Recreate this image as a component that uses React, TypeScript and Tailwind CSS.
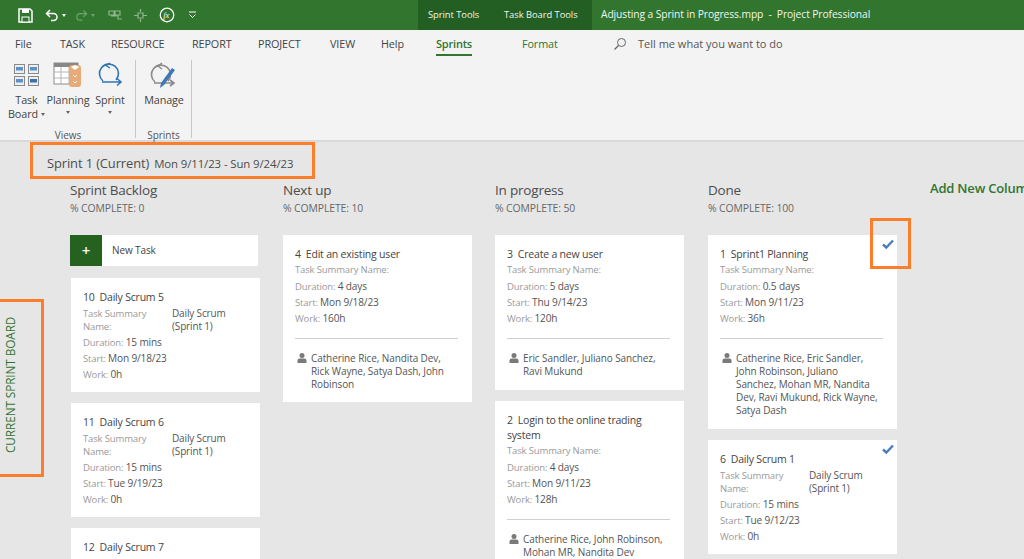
import React from "react";

const font = { fontFamily: '"Open Sans","Noto Sans",sans-serif' };

type Task = { title: string[]; id: string; summary?: string[]; dur?: string; start?: string; work?: string; people?: string[]; check?: boolean; h: string };

const Row = ({ label, value }: { label: string; value?: string }) => (
  <div className="h-[16px] overflow-visible whitespace-nowrap">
    {label} {value && <span className="text-[10.1px] text-[#555]">{value}</span>}
  </div>
);

const Card = ({ t }: { t: Task }) => (
  <div className={`relative shrink-0 w-[189px] overflow-hidden bg-white pl-[12px] pr-[10px] pt-[11px] ${t.h}`}>
    {t.check && (
      <svg className="absolute right-[2px] top-[3px]" width="14" height="12" viewBox="0 0 14 12">
        <path d="M2 6.5 L5.3 9.5 L12 2.5" fill="none" stroke="#4a7ebb" strokeWidth="2.4" />
      </svg>
    )}
    <div className="text-[10.5px] leading-[16px] text-[#444] tracking-[-0.2px]">
      {t.title.map((l, i) => (
        <div key={i} className={i > 0 ? "-mt-[1px]" : ""}>
          {i === 0 ? <><span className="mr-[5px]">{t.id}</span>{l}</> : l}
        </div>
      ))}
    </div>
    {t.dur && (
      <div className="text-[9.5px] leading-[16px] text-[#9a9a9a] tracking-[-0.15px]">
        {t.summary ? (
          <div className="flex">
            <div className="w-[89px] leading-[13px] pt-[2px] pb-[1px]">Task Summary<br />Name:</div>
            <div className="text-[10px] text-[#555] leading-[13px] pt-[2px] pb-[1px]">{t.summary[0]}<br />{t.summary[1]}</div>
          </div>
        ) : (
          <Row label="Task Summary Name:" />
        )}
        <Row label="Duration:" value={t.dur} />
        <Row label="Start:" value={t.start} />
        <Row label="Work:" value={t.work} />
      </div>
    )}
    {t.people && (
      <>
        <div className="mt-[12px] mr-[4px] h-px bg-[#d0d0d0]" />
        <div className="mt-[13px] flex text-[10px] leading-[12.9px] text-[#555] tracking-[-0.1px]">
          <svg className="mt-[1px] mr-[4px] shrink-0 ml-[2px]" width="10" height="10" viewBox="0 0 10 10">
            <circle cx="5" cy="2.6" r="2.5" fill="#7a7a7a" />
            <path d="M0.5 10 V7.4 Q0.5 5.6 2.5 5.6 H7.5 Q9.5 5.6 9.5 7.4 V10 Z" fill="#7a7a7a" />
          </svg>
          <div className="whitespace-nowrap">
            {t.people.map((p, i) => <div key={i}>{p}</div>)}
          </div>
        </div>
      </>
    )}
  </div>
);

const Column = ({ title, pct, children, cls = "" }: { title: string; pct: string; children: React.ReactNode; cls?: string }) => (
  <div className={`w-[189px] shrink-0 ${cls}`}>
    <div className="text-[13.5px] leading-[18px] text-[#4d4d4d] font-medium tracking-[-0.2px]">{title}</div>
    <div className="mt-[1px] text-[10.4px] leading-[16px] text-[#666] tracking-[-0.1px]">% COMPLETE: {pct}</div>
    <div className="mt-[19px] flex flex-col gap-[11px]">{children}</div>
  </div>
);

const Tab = ({ label, w, cls = "text-[#444]" }: { label: string; w: string; cls?: string }) => (
  <div className={`shrink-0 text-[10.8px] leading-[28px] tracking-[-0.1px] ${w} ${cls}`}>{label}</div>
);

const TaskBoardIcon = () => (
  <svg width="25" height="22" viewBox="0 0 25 22">
    {[[0,0],[14,0],[0,12],[14,12]].map(([x,y],i)=>(
      <g key={i}>
        <rect x={x+.5} y={y+.5} width="10" height="9" fill="#eee" stroke="#8a8a8a" />
        <rect x={x+2} y={y+3} width="7" height="3.5" fill={i===3?"#3d6fa8":"#5b93c9"} />
      </g>
    ))}
  </svg>
);

const PlanningIcon = () => (
  <svg width="30" height="26" viewBox="0 0 30 26">
    <rect x="1" y="1" width="24" height="21" fill="#fff" stroke="#8c8c8c" />
    <rect x="1" y="1" width="24" height="4" fill="#888" />
    <path d="M1 10H24M1 16H24M8 5V22M16 5V22" stroke="#b5b5b5" />
    <rect x="16" y="3" width="12" height="22" rx="3" fill="#e8ab78" />
    <path d="M18 5 L22 3 L26 5 L22 8 Z" fill="#fff" />
    <path d="M20 13l2 2 2-2M20 19l2 2 2-2" stroke="#fff" fill="none" />
  </svg>
);

const SprintIcon = () => (
  <svg width="26" height="26" viewBox="0 0 26 26">
    <path d="M6 19 A9.5 9.5 0 1 1 19 18" fill="none" stroke="#2f75b5" strokeWidth="1.6" />
    <path d="M13 1 L9 3.5 L13 6" fill="none" stroke="#2f75b5" strokeWidth="1.4" />
    <path d="M5 20 H24 M20 16.5 L24 20 L20 23.5" fill="none" stroke="#2f75b5" strokeWidth="1.6" />
  </svg>
);

const ManageIcon = () => (
  <svg width="29" height="29" viewBox="0 0 29 29">
    <path d="M5 21 A9.5 9.5 0 1 1 18 20" fill="none" stroke="#8a8a8a" strokeWidth="1.6" />
    <path d="M12 2 L8 5 L12 8" fill="none" stroke="#8a8a8a" strokeWidth="1.4" />
    <path d="M4 22 H24 M20 19 L24 22 L20 25" fill="none" stroke="#8a8a8a" strokeWidth="1.6" />
    <path d="M25 9 L14 24 L10 27 L11 22 L22 7 Z" fill="#3f78b5" />
  </svg>
);

const Caret = () => <span className="block w-0 h-0 border-x-[2.5px] border-x-transparent border-t-[3px] border-t-[#666]" />;

const RibbonBtn = ({ w, icon, lines, caret }: { w: string; icon: React.ReactNode; lines: string[]; caret?: "inline" | "below" }) => (
  <div className={`shrink-0 flex flex-col items-center ${w}`}>
    <div className="h-[30px] flex items-center justify-center">{icon}</div>
    <div className="mt-[3px] text-[10.8px] text-[#444] text-center tracking-[-0.1px] whitespace-nowrap">
      {lines.map((l, i) => (
        <div key={i} className="h-[14px] leading-[14px] flex items-center justify-center">
          {l}
          {caret === "inline" && i === lines.length - 1 && <span className="ml-[3px]"><Caret /></span>}
        </div>
      ))}
      {caret === "below" && <div className="h-[10px] flex items-center justify-center"><Caret /></div>}
    </div>
  </div>
);

const backlog: Task[] = [
  { id: "10", title: ["Daily Scrum 5"], summary: ["Daily Scrum", "(Sprint 1)"], dur: "15 mins", start: "Mon 9/18/23", work: "0h", h: "h-[114px]" },
  { id: "11", title: ["Daily Scrum 6"], summary: ["Daily Scrum", "(Sprint 1)"], dur: "15 mins", start: "Tue 9/19/23", work: "0h", h: "h-[114px]" },
  { id: "12", title: ["Daily Scrum 7"], h: "h-[31px]" },
];

export default function App() {
  return (
    <div style={font} className="w-[1024px] h-[559px] overflow-hidden relative flex flex-col bg-[#e6e6e6]">
      {/* title bar */}
      <div className="h-[30px] shrink-0 flex items-center bg-[#31752f] text-white">
        <div className="w-[418px] shrink-0 flex items-center pl-[18px]">
          <svg width="15" height="15" viewBox="0 0 15 15">
            <path d="M1 1H12L14 3V14H1Z" fill="none" stroke="#fff" strokeWidth="1.5" />
            <rect x="4" y="1" width="7" height="4" fill="#fff" />
            <rect x="4" y="9" width="7" height="5" fill="#31752f" stroke="#fff" />
          </svg>
          <svg className="ml-[12px]" width="14" height="13" viewBox="0 0 14 13">
            <path d="M5 1 L1.5 4.5 L5 8 M2 4.5 H8.5 A3.5 3.5 0 0 1 8.5 11.5 H6" fill="none" stroke="#fff" strokeWidth="1.5" />
          </svg>
          <span className="ml-[3px] w-0 h-0 border-x-[2.5px] border-x-transparent border-t-[3px] border-t-white" />
          <svg className="ml-[9px]" width="13" height="13" viewBox="0 0 14 13">
            <path d="M9 1 L12.5 4.5 L9 8 M12 4.5 H5.5 A3.5 3.5 0 0 0 5.5 11.5 H8" fill="none" stroke="#6fa36e" strokeWidth="1.3" />
          </svg>
          <span className="ml-[3px] w-0 h-0 border-x-[2.5px] border-x-transparent border-t-[3px] border-t-[#6fa36e]" />
          <svg className="ml-[13px]" width="15" height="12" viewBox="0 0 15 12">
            <path d="M1 2H6V6H1ZM7 2H12V6H7ZM3 7H9M10 6V10H14" fill="none" stroke="#8fb88e" strokeWidth="1.2" />
          </svg>
          <svg className="ml-[10px]" width="15" height="13" viewBox="0 0 15 13">
            <path d="M1 6.5H5M10 6.5H14M7.5 0V3M7.5 10V13M5 4H10V9H5Z" fill="none" stroke="#8fb88e" strokeWidth="1.2" />
          </svg>
          <svg className="ml-[11px]" width="16" height="16" viewBox="0 0 17 17">
            <circle cx="8.5" cy="8.5" r="7.2" fill="none" stroke="#fff" strokeWidth="1.3" />
            <text x="4.5" y="12" fontSize="9" fontStyle="italic" fontFamily="Liberation Serif" fill="#fff">fx</text>
          </svg>
          <svg className="ml-[13px]" width="9" height="8" viewBox="0 0 9 8">
            <path d="M1 1H8M1.5 3.5L4.5 6.5L7.5 3.5" fill="none" stroke="#fff" strokeWidth="1" />
          </svg>
        </div>
        <div className="w-[174px] h-full shrink-0 flex items-center bg-[#235f23] text-[9.4px] tracking-[-0.05px] text-[#f0f5f0]">
          <span className="ml-[10px] w-[76px]">Sprint Tools</span>
          <span>Task Board Tools</span>
        </div>
        <div className="ml-[9px] text-[10.3px] tracking-[-0.1px] whitespace-nowrap text-[#f0f5f0]">Adjusting a Sprint in Progress.mpp&nbsp; -&nbsp; Project Professional</div>
      </div>

      {/* ribbon */}
      <div className="h-[112px] shrink-0 bg-[#f3f3f3] border-b-2 border-[#d9d9d9]">
        <div className="h-[28px] flex items-center pl-[15px]">
          <Tab label="File" w="w-[45px]" />
          <Tab label="TASK" w="w-[51px]" />
          <Tab label="RESOURCE" w="w-[81px]" />
          <Tab label="REPORT" w="w-[66px]" />
          <Tab label="PROJECT" w="w-[72px]" />
          <Tab label="VIEW" w="w-[51px]" />
          <Tab label="Help" w="w-[55px]" />
          <div className="w-[86px] shrink-0 h-[28px]">
            <span className="inline-block h-[26px] text-[11px] leading-[28px] font-semibold text-[#31752f] border-b-2 border-[#31752f] tracking-[-0.2px]">Sprints</span>
          </div>
          <Tab label="Format" w="w-[91px]" cls="text-[#31752f]" />
          <svg width="14" height="14" viewBox="0 0 14 14" className="shrink-0">
            <circle cx="8.5" cy="5.5" r="4" fill="none" stroke="#666" />
            <path d="M5.5 8.5 L1.5 12.5" stroke="#666" strokeWidth="1.2" />
          </svg>
          <span className="ml-[11px] text-[11px] text-[#555] whitespace-nowrap">Tell me what you want to do</span>
        </div>
        <div className="flex pl-[9px] h-[82px]">
          <div className="flex flex-col border-r border-[#c8c8c8] w-[127px] shrink-0 mt-[2px] h-[78px]">
            <div className="flex h-[66px] shrink-0">
              <RibbonBtn w="w-[35px]" icon={<TaskBoardIcon />} lines={["Task", "Board"]} caret="inline" />
              <RibbonBtn w="w-[48px]" icon={<PlanningIcon />} lines={["Planning"]} caret="below" />
              <RibbonBtn w="w-[36px]" icon={<SprintIcon />} lines={["Sprint"]} caret="below" />
            </div>
            <div className="text-center pr-[8px] mt-[2px] text-[10px] leading-[14px] text-[#555]">Views</div>
          </div>
          <div className="flex flex-col border-r border-[#c8c8c8] w-[56px] shrink-0 mt-[2px] h-[78px]">
            <div className="h-[66px] shrink-0">
              <RibbonBtn w="w-[56px]" icon={<ManageIcon />} lines={["Manage"]} />
            </div>
            <div className="text-center mt-[2px] text-[10px] leading-[14px] text-[#555]">Sprints</div>
          </div>
        </div>
      </div>

      {/* board */}
      <div className="flex-1 min-h-0 overflow-hidden pl-[47px]">
        <div className="pt-[8px] h-[39px] text-[#4d4d4d] whitespace-nowrap tracking-[-0.1px]">
          <span className="text-[12.9px] font-medium leading-[16px]">Sprint 1 (Current)</span>
          <span className="ml-[5px] text-[11.4px] font-medium leading-[16px]">Mon 9/11/23 - Sun 9/24/23</span>
        </div>
        <div className="ml-[23px] flex gap-[24px]">
          <Column title="Sprint Backlog" pct="0">
            <div className="flex items-center h-[31px] w-[188px] bg-white">
              <div className="w-[32px] h-full bg-[#25611f] text-white flex items-center justify-center text-[15px] font-semibold leading-none">+</div>
              <div className="ml-[10px] text-[10px] text-[#444] tracking-[-0.1px]">New Task</div>
            </div>
            <div className="mt-[1px] ml-[1px] flex flex-col gap-[11px]">
              {backlog.map(t => <Card key={t.id} t={t} />)}
            </div>
          </Column>
          <Column title="Next up" pct="10">
            <Card t={{ id: "4", title: ["Edit an existing user"], dur: "4 days", start: "Mon 9/18/23", work: "160h", h: "h-[167px]", people: ["Catherine Rice, Nandita Dev,", "Rick Wayne, Satya Dash, John", "Robinson"] }} />
          </Column>
          <Column title="In progress" pct="50" cls="-ml-[1px]">
            <Card t={{ id: "3", title: ["Create a new user"], dur: "5 days", start: "Thu 9/14/23", work: "120h", h: "h-[155px]", people: ["Eric Sandler, Juliano Sanchez,", "Ravi Mukund"] }} />
            <Card t={{ id: "2", title: ["Login to the online trading", "system"], dur: "4 days", start: "Mon 9/11/23", work: "128h", h: "h-[158px]", people: ["Catherine Rice, John Robinson,", "Mohan MR, Nandita Dev"] }} />
          </Column>
          <Column title="Done" pct="100">
            <Card t={{ id: "1", title: ["Sprint1 Planning"], dur: "0.5 days", start: "Mon 9/11/23", work: "36h", h: "h-[194px]", check: true, people: ["Catherine Rice, Eric Sandler,", "John Robinson, Juliano", "Sanchez, Mohan MR, Nandita", "Dev, Ravi Mukund, Rick Wayne,", "Satya Dash"] }} />
            <Card t={{ id: "6", title: ["Daily Scrum 1"], summary: ["Daily Scrum", "(Sprint 1)"], dur: "15 mins", start: "Tue 9/12/23", work: "0h", h: "h-[114px]", check: true }} />
          </Column>
          <div className="shrink-0 ml-[9px] -mt-[2px] text-[13px] leading-[18px] font-semibold text-[#31752f] tracking-[-0.2px] whitespace-nowrap">Add New Column</div>
        </div>
      </div>

      {/* annotations */}
      <div className="absolute left-[30px] top-[142px] w-[285px] h-[37px] border-[3px] border-[#fd7e2a]" />
      <div className="absolute left-[-3px] top-[299px] w-[47px] h-[178px] border-[3px] border-[#fd7e2a] flex items-center justify-center">
        <span className="-rotate-90 whitespace-nowrap text-[11.8px] text-[#31752f] tracking-[-0.1px] -translate-x-[9px] -translate-y-[3px]">CURRENT SPRINT BOARD</span>
      </div>
      <div className="absolute left-[870px] top-[218px] w-[41px] h-[51px] border-[3px] border-[#fd7e2a]" />
    </div>
  );
}
